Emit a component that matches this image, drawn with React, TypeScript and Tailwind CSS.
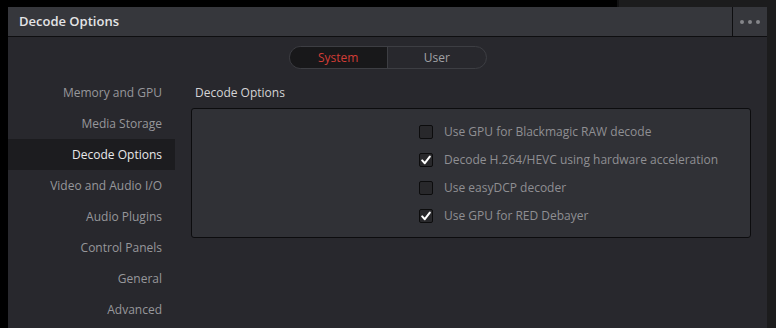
import React, { useState } from 'react';

const sections = [
	'Memory and GPU',
	'Media Storage',
	'Decode Options',
	'Video and Audio I/O',
	'Audio Plugins',
	'Control Panels',
	'General',
	'Advanced',
];

const initialOptions = [
	{ label: 'Use GPU for Blackmagic RAW decode', checked: false },
	{ label: 'Decode H.264/HEVC using hardware acceleration', checked: true },
	{ label: 'Use easyDCP decoder', checked: false },
	{ label: 'Use GPU for RED Debayer', checked: true },
];

const CheckBox = ({ checked, onClick }: { checked: boolean; onClick: () => void }) => (
	<button
		onClick={onClick}
		className="w-[14px] h-[14px] rounded-[2px] border border-[#0c0c0d] bg-[#28282b] flex items-center justify-center shrink-0"
	>
		{checked && (
			<svg width="10" height="10" viewBox="0 0 10 10">
				<path d="M1.2 5.4 L3.8 8.2 L8.8 1.6" fill="none" stroke="#ffffff" strokeWidth="2" strokeLinecap="round" strokeLinejoin="round" />
			</svg>
		)}
	</button>
);

const App = () => {
	const [mode, setMode] = useState('System');
	const [active, setActive] = useState('Decode Options');
	const [options, setOptions] = useState(initialOptions);

	const toggle = (i: number) => {
		setOptions(options.map((o, idx) => (idx === i ? { ...o, checked: !o.checked } : o)));
	};

	return (
		<div className="w-[776px] h-[328px] bg-black flex flex-col overflow-hidden" style={{ fontFamily: '"Open Sans", sans-serif' }}>
			<div className="h-[7px] flex shrink-0">
				<div className="flex-1 bg-black" />
				<div className="w-[2px] bg-[#111112]" />
				<div className="w-[157px] bg-[#1c1c1d]" />
			</div>
			<div className="flex flex-1 min-h-0">
				<div className="w-[8px] bg-black" />
				<div className="w-[759px] flex flex-col bg-[#28282d]">
					<div className="h-[30px] flex items-center bg-[#36373c] border-b border-[#0e0e10] shrink-0">
						<span className="flex-1 pl-[11px] text-[13px] font-semibold text-[#e4e4e6]">Decode Options</span>
						<div className="w-[35px] h-full border-l border-[#0e0e10] flex items-center justify-center gap-[4px]">
							<span className="w-[4px] h-[4px] rounded-full bg-[#85868a]" />
							<span className="w-[4px] h-[4px] rounded-full bg-[#85868a]" />
							<span className="w-[4px] h-[4px] rounded-full bg-[#85868a]" />
						</div>
					</div>

					<div className="flex justify-center pt-[9px]">
						<div className="w-[198px] h-[23px] flex rounded-full border border-[#3d3e43] overflow-hidden text-[12px]">
							{['System', 'User'].map((m, i) => (
								<button
									key={m}
									onClick={() => setMode(m)}
									className={`flex-1 flex items-center justify-center ${i === 0 ? 'border-r border-[#3d3e43]' : ''} ${
										mode === m ? 'bg-[#18181a] text-[#d23d36]' : 'text-[#a2a2a6]'
									}`}
								>
									{m}
								</button>
							))}
						</div>
					</div>

					<div className="flex pt-[8px]">
						<div className="w-[167px] flex flex-col">
							{sections.map((s) => (
								<button
									key={s}
									onClick={() => setActive(s)}
									className={`h-[31px] text-right pr-[13px] text-[12px] ${
										active === s ? 'bg-[#1c1c1f] text-[#e8e8ea]' : 'text-[#97979b]'
									}`}
								>
									{s}
								</button>
							))}
						</div>
						<div className="flex-1 ml-[16px] mr-[16px] flex flex-col">
							<div className="h-[31px] flex items-center pl-[4px] text-[12px] text-[#d4d4d6]">Decode Options</div>
							<div className="h-[130px] rounded-[3px] border border-[#0c0c0e] bg-[#303136] pt-[9px] pl-[227px] flex flex-col">
								{options.map((o, i) => (
									<div key={o.label} className="h-[28px] flex items-center gap-[11px]">
										<CheckBox checked={o.checked} onClick={() => toggle(i)} />
										<span className="text-[12px] text-[#8f8f93]">{o.label}</span>
									</div>
								))}
							</div>
						</div>
					</div>
				</div>
				<div className="flex-1 bg-[#1c1c1d]" />
			</div>
		</div>
	);
};

export default App;
